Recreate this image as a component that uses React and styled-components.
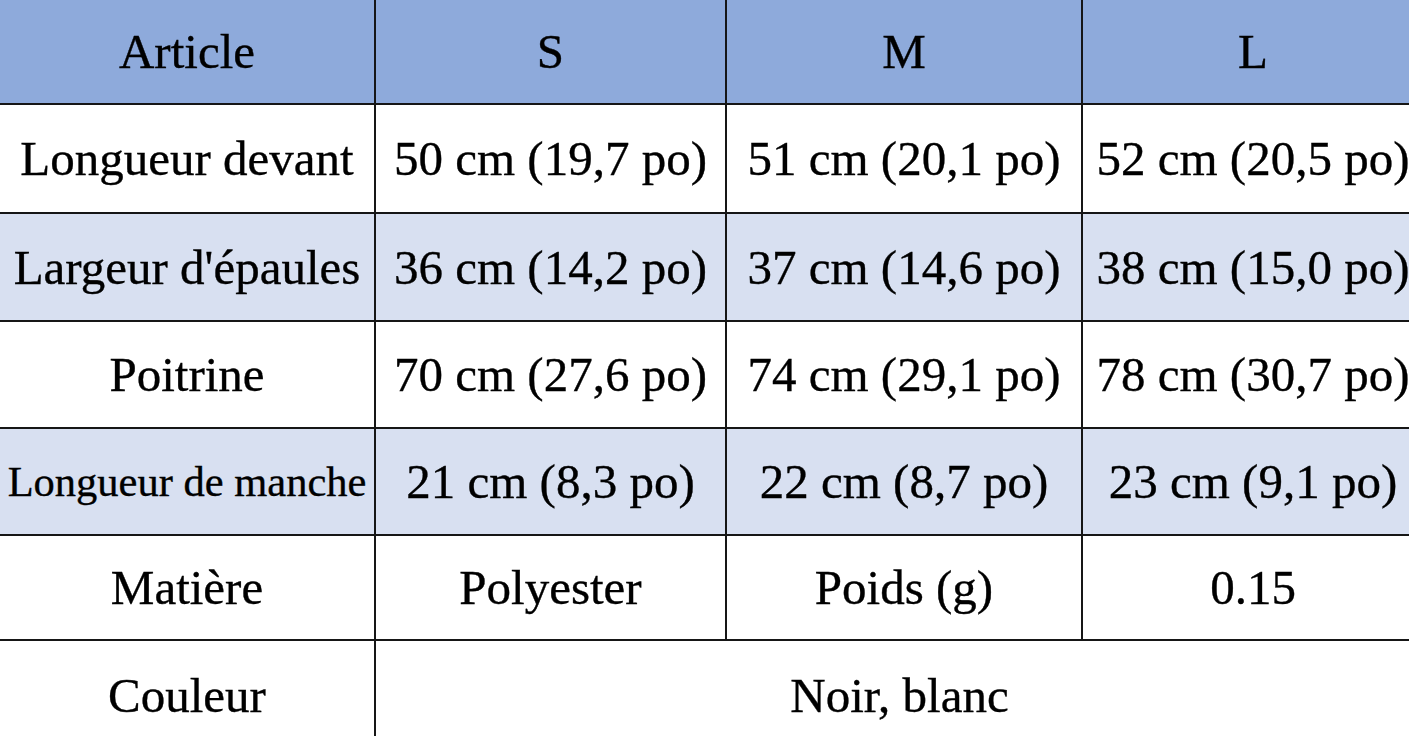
import React from "react";
import styled, { createGlobalStyle } from "styled-components";

const GlobalStyle = createGlobalStyle`
  html, body {
    margin: 0;
    padding: 0;
    background: #ffffff;
    overflow: hidden;
  }
`;

const Page = styled.div`
  width: 1409px;
  height: 736px;
  overflow: hidden;
  background: #ffffff;
`;

const Table = styled.table`
  width: 1424px;
  table-layout: fixed;
  border-collapse: collapse;
  font-family: "Liberation Serif", "Times New Roman", serif;
  color: #000000;
  -webkit-text-stroke: 0.35px #000000;
`;

const Row = styled.tr`
  height: ${(p) => p.$h}px;
  background: ${(p) =>
    p.$variant === "head" ? "#8eaadb" : p.$variant === "alt" ? "#d8e0f1" : "#ffffff"};
`;

const Cell = styled.td`
  padding: 0 2px;
  text-align: center;
  vertical-align: middle;
  font-size: ${(p) => p.$size || 49}px;
  font-weight: normal;
  white-space: nowrap;
  overflow: hidden;
  border-right: 2px solid #161616;
  border-bottom: 2px solid #161616;
`;

const HeadCell = styled(Cell).attrs({ as: "th" })``;

const rows = [
  { label: "Longueur devant", h: 109, v: ["50 cm (19,7 po)", "51 cm (20,1 po)", "52 cm (20,5 po)"] },
  { label: "Largeur d'épaules", h: 108, alt: true, v: ["36 cm (14,2 po)", "37 cm (14,6 po)", "38 cm (15,0 po)"] },
  { label: "Poitrine", h: 107, v: ["70 cm (27,6 po)", "74 cm (29,1 po)", "78 cm (30,7 po)"] },
  { label: "Longueur de manche", h: 107, alt: true, size: 42.5, v: ["21 cm (8,3 po)", "22 cm (8,7 po)", "23 cm (9,1 po)"] },
  { label: "Matière", h: 105, v: ["Polyester", "Poids (g)", "0.15"] },
];

export default function App() {
  return (
    <Page>
      <GlobalStyle />
      <Table>
        <colgroup>
          <col style={{ width: 375 }} />
          <col style={{ width: 351 }} />
          <col style={{ width: 356 }} />
          <col style={{ width: 342 }} />
        </colgroup>
        <thead>
          <Row $h={104} $variant="head">
            <HeadCell>Article</HeadCell>
            <HeadCell>S</HeadCell>
            <HeadCell>M</HeadCell>
            <HeadCell>L</HeadCell>
          </Row>
        </thead>
        <tbody>
          {rows.map((r) => (
            <Row key={r.label} $h={r.h} $variant={r.alt ? "alt" : "plain"}>
              <Cell $size={r.size}>{r.label}</Cell>
              {r.v.map((x) => (
                <Cell key={x}>{x}</Cell>
              ))}
            </Row>
          ))}
          <Row $h={110} $variant="plain">
            <Cell>Couleur</Cell>
            <Cell colSpan={3}>Noir, blanc</Cell>
          </Row>
        </tbody>
      </Table>
    </Page>
  );
}
